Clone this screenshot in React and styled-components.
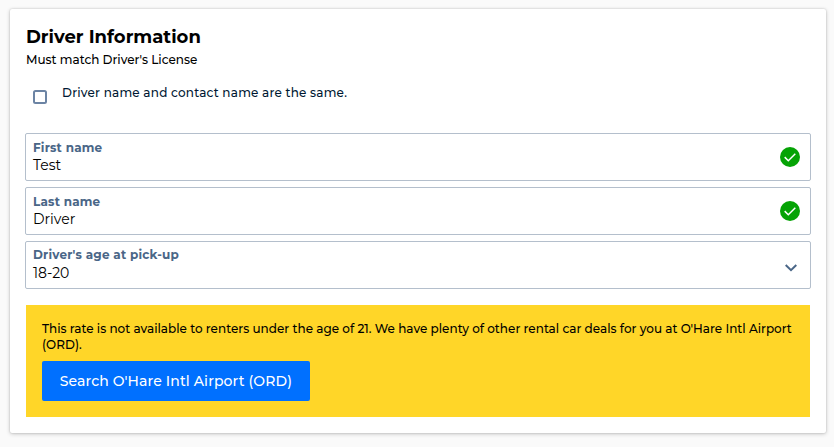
import React from "react";
import styled, { createGlobalStyle } from "styled-components";

const GlobalStyle = createGlobalStyle`
  * { box-sizing: border-box; }
  body {
    margin: 0;
    background: #fafafa;
    color: #000;
    font-family: Montserrat, Inter, sans-serif;
    font-size: 12px;
    font-weight: 500;
    line-height: 16px;
  }
`;

const Page = styled.main`
  height: 447px;
  padding: 9px 8px 14px 10px;
`;

const Card = styled.section`
  height: 424px;
  padding: 16px;
  border-radius: 2px;
  background: #fff;
  box-shadow: 0 0 2px rgba(0, 0, 0, 0.18), 0 1px 4px rgba(0, 0, 0, 0.2);
`;

const Title = styled.h2`
  margin: 0;
  font-size: 18px;
  font-weight: 700;
  line-height: 24px;
`;

const Subtitle = styled.p`
  margin: 3px 0 0;
`;

const CheckRow = styled.label`
  display: flex;
  height: 48px;
  margin-top: 8px;
  padding-left: 7px;
  gap: 15px;
`;

const CheckBox = styled.input`
  appearance: none;
  width: 14px;
  height: 14px;
  margin: 14px 0 0;
  border: 2px solid #6c84a4;
  border-radius: 2.5px;
  background: #fff;
`;

const CheckText = styled.span`
  margin-top: 9px;
  color: #001833;
  letter-spacing: 0.22px;
`;

const Fields = styled.div`
  display: flex;
  flex-direction: column;
  gap: 6px;
  margin: 9px -1px 16px;
`;

const Field = styled.div`
  display: flex;
  align-items: center;
  justify-content: space-between;
  height: 48px;
  padding: 0 10px 0 7px;
  border: 1px solid #b4bfcc;
  border-radius: 2px;
`;

const FieldText = styled.div`
  display: flex;
  flex-direction: column;
  align-self: flex-start;
  padding-top: ${(p) => (p.$select ? 5 : 6)}px;
`;

const FieldLabel = styled.span`
  color: #4a6687;
  font-weight: 700;
  letter-spacing: 0.2px;
`;

const FieldValue = styled.span`
  margin-top: ${(p) => (p.$select ? 0 : -1)}px;
  font-size: 14px;
  font-weight: 400;
  line-height: 20px;
`;

const Chevron = styled.svg`
  width: 14px;
  height: 10px;
  margin: 5px 2px 0 0;
`;

const Notice = styled.div`
  height: 112px;
  padding: 16px;
  background: #ffd628;
`;

const NoticeText = styled.p`
  margin: 0;
  letter-spacing: 0.01px;
`;

const SearchButton = styled.button`
  display: block;
  width: 268px;
  height: 40px;
  margin-top: 8px;
  padding: 0;
  border: 0;
  border-radius: 2px;
  background: #0070ff;
  color: #fff;
  font: 500 14px/20px Montserrat, Inter, sans-serif;
  letter-spacing: 0.12px;
  white-space: nowrap;
`;

const CheckIcon = () => (
  <svg width="20" height="20" viewBox="0 0 20 20">
    <circle cx="10" cy="10" r="10" fill="#05a305" />
    <path d="M4.7 10.1 8.3 13.7 15.3 6.7" fill="none" stroke="#fff" strokeWidth="1.5" />
  </svg>
);

const fields = [
  { label: "First name", value: "Test" },
  { label: "Last name", value: "Driver" },
  { label: "Driver's age at pick-up", value: "18-20", select: true },
];

export default function App() {
  return (
    <>
      <GlobalStyle />
      <Page>
        <Card>
          <Title>Driver Information</Title>
          <Subtitle>Must match Driver's License</Subtitle>
          <CheckRow>
            <CheckBox type="checkbox" />
            <CheckText>Driver name and contact name are the same.</CheckText>
          </CheckRow>
          <Fields>
            {fields.map((f) => (
              <Field key={f.label}>
                <FieldText $select={f.select}>
                  <FieldLabel>{f.label}</FieldLabel>
                  <FieldValue $select={f.select}>{f.value}</FieldValue>
                </FieldText>
                {f.select ? (
                  <Chevron viewBox="0 0 14 10">
                    <path d="M1.7 2 7 7.1 12.3 2" fill="none" stroke="#4a6687" strokeWidth="2" />
                  </Chevron>
                ) : (
                  <CheckIcon />
                )}
              </Field>
            ))}
          </Fields>
          <Notice>
            <NoticeText>
              This rate is not available to renters under the age of 21. We have plenty of other
              rental car deals for you at O'Hare Intl Airport (ORD).
            </NoticeText>
            <SearchButton>Search O'Hare Intl Airport (ORD)</SearchButton>
          </Notice>
        </Card>
      </Page>
    </>
  );
}
